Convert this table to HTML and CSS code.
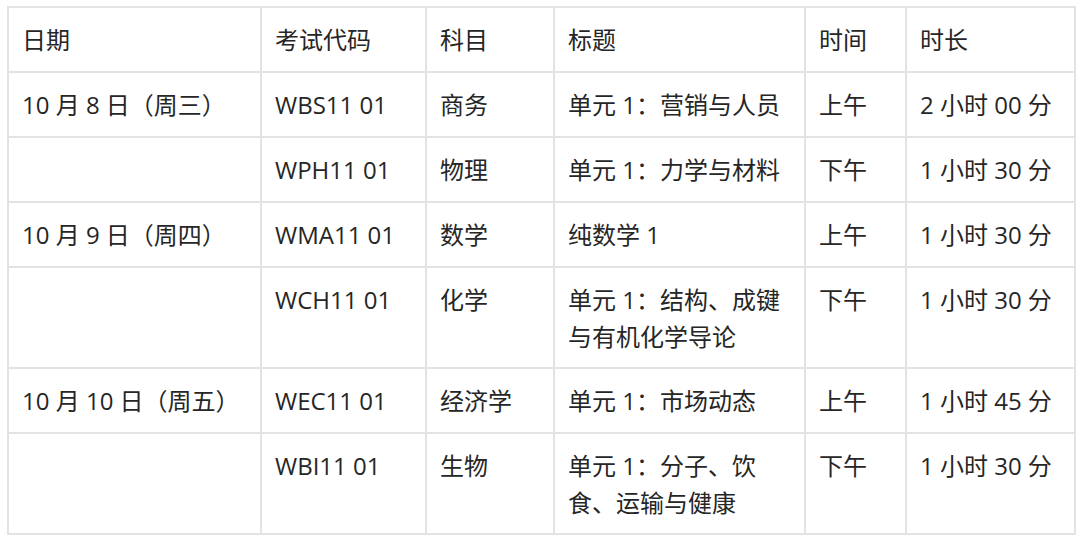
FILE: index.html
```html
<!DOCTYPE html>
<html lang="zh-CN">
<head>
<meta charset="utf-8">
<link rel="stylesheet" href="styles.css">
</head>
<body>
<table class="exam">
  <colgroup>
    <col class="c-date"><col class="c-code"><col class="c-subj"><col class="c-title"><col class="c-time"><col class="c-dur">
  </colgroup>
  <tr class="r1"><td>日期</td><td>考试代码</td><td>科目</td><td>标题</td><td>时间</td><td>时长</td></tr>
  <tr class="r1"><td>10 月 8 日（周三）</td><td>WBS11 01</td><td>商务</td><td>单元 1：营销与人员</td><td>上午</td><td>2 小时 00 分</td></tr>
  <tr class="r1"><td></td><td>WPH11 01</td><td>物理</td><td>单元 1：力学与材料</td><td>下午</td><td>1 小时 30 分</td></tr>
  <tr class="r1"><td>10 月 9 日（周四）</td><td>WMA11 01</td><td>数学</td><td>纯数学 1</td><td>上午</td><td>1 小时 30 分</td></tr>
  <tr class="r2"><td></td><td>WCH11 01</td><td>化学</td><td>单元 1：结构、成键与有机化学导论</td><td>下午</td><td>1 小时 30 分</td></tr>
  <tr class="r1"><td>10 月 10 日（周五）</td><td>WEC11 01</td><td>经济学</td><td>单元 1：市场动态</td><td>上午</td><td>1 小时 45 分</td></tr>
  <tr class="r2"><td></td><td>WBI11 01</td><td>生物</td><td>单元 1：分子、饮食、运输与健康</td><td>下午</td><td>1 小时 30 分</td></tr>
</table>
</body>
</html>
```
FILE: styles.css
```css
html, body { background: #ffffff; }
body {
  margin: 6px 0 0 7px;
  font-family: "Open Sans", "Noto Sans CJK SC", sans-serif;
  color: #262626;
  font-size: 24px;
}
.exam {
  border-collapse: collapse;
  table-layout: fixed;
  width: 1067px;
}
.c-date { width: 253px; }
.c-code { width: 165px; }
.c-subj { width: 128px; }
.c-title { width: 251px; }
.c-time { width: 101px; }
.c-dur { width: 169px; }
.exam td {
  border: 2px solid #e3e3e6;
  padding: 13px 13px 0 13px;
  vertical-align: top;
  line-height: 37px;
  box-sizing: border-box;
}
.r1 td { height: 65px; }
.r2 td { height: 101px; }
```
